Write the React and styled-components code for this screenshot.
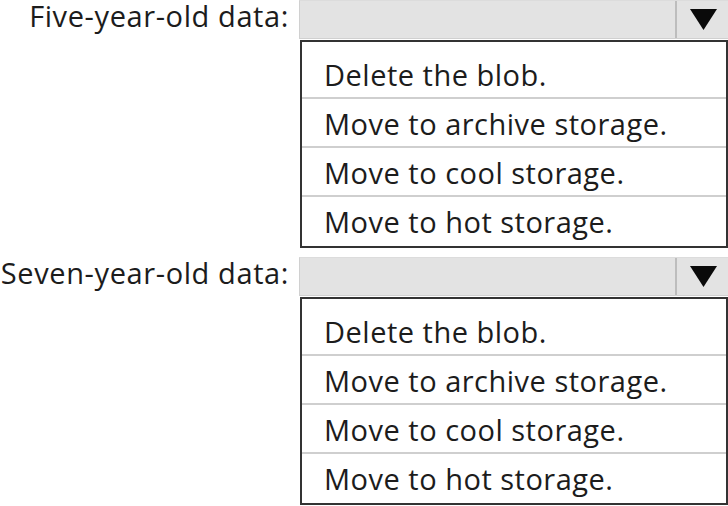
import React from 'react'
import styled, { createGlobalStyle } from 'styled-components'

const GlobalStyle = createGlobalStyle`
   html, body {
      margin: 0;
      padding: 0;
      background: #ffffff;
   }
   body {
      font-family: 'Open Sans', 'Noto Sans', sans-serif;
      color: #1c1c1c;
   }
`

const questions = [
   { label: 'Five-year-old data:' },
   { label: 'Seven-year-old data:' },
]

const options = [
   'Delete the blob.',
   'Move to archive storage.',
   'Move to cool storage.',
   'Move to hot storage.',
]

const Arrow = () => (
   <svg width="27" height="21" viewBox="0 0 27 21">
      <polygon points="0,0 27,0 13.5,21" fill="#0a0a0a" />
   </svg>
)

export default function App() {
   return (
      <>
         <GlobalStyle />
         <Page>
            {questions.map((q) => (
               <Question key={q.label}>
                  <Label>{q.label}</Label>
                  <Field>
                     <Select>
                        <SelectValue />
                        <ArrowCell>
                           <Arrow />
                        </ArrowCell>
                     </Select>
                     <List>
                        {options.map((o) => (
                           <Option key={o}>{o}</Option>
                        ))}
                     </List>
                  </Field>
               </Question>
            ))}
         </Page>
      </>
   )
}

const Page = styled.div`
   width: 728px;
   display: flex;
   flex-direction: column;
   gap: 9px;
`

const Question = styled.div`
   display: grid;
   grid-template-columns: 299px 1fr;
   align-items: start;
`

const Label = styled.div`
   text-align: right;
   padding-right: 10px;
   font-size: 29px;
   letter-spacing: 0.6px;
   line-height: 32px;
   white-space: nowrap;
`

const Field = styled.div`
   display: flex;
   flex-direction: column;
`

const Select = styled.div`
   height: 39px;
   box-sizing: border-box;
   display: flex;
   background: #e3e3e3;
   border: 1px solid #d0d0d0;
   border-top-color: #dcdcdc;
   border-right: none;
`

const SelectValue = styled.div`
   flex: 1;
`

const ArrowCell = styled.div`
   width: 49px;
   display: flex;
   align-items: center;
   justify-content: center;
   border-left: 2px solid #bdbdbd;
   padding-left: 2px;
`

const List = styled.div`
   margin-left: 1px;
   margin-top: 1px;
   border: 2px solid #333333;
   padding-top: 8px;
   background: #ffffff;
`

const Option = styled.div`
   height: 49px;
   box-sizing: border-box;
   display: flex;
   align-items: center;
   padding: 2px 0 0 22px;
   font-size: 29px;
   letter-spacing: 0.5px;
   white-space: nowrap;
   border-bottom: 2px solid #cfcfcf;
   &:last-child {
      border-bottom: none;
      padding-bottom: 2px;
   }
`
